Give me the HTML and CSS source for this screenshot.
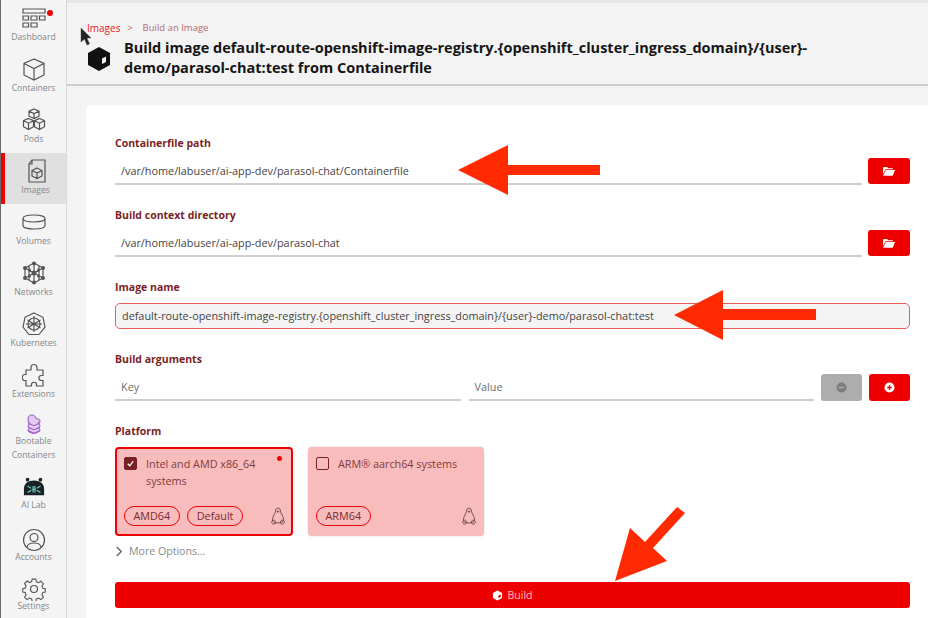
FILE: index.html
```html
<!DOCTYPE html>
<html lang="en">
<head>
<meta charset="utf-8">
<title>Build an Image</title>
<link rel="stylesheet" href="styles.css">
</head>
<body>
<div class="app">
  <nav class="sidebar">
    <a class="nav-item">
      <svg class="nav-icon" viewBox="0 -3.500 24 24"><path d="M1 -.5h22v4H1zM1 6.500h5.500v4H1zM9 6.500h6v4H9zM17.500 6.500H23v4h-5.500zM1 13.500h5.500v4H1zM9 13.500h6v4H9z"/></svg>
      <span class="nav-label">Dashboard</span><span class="nav-dot"></span>
    </a>
    <a class="nav-item">
      <svg class="nav-icon" viewBox="0 0 24 24"><path d="M12 2 2 6.500V18l10 5 10-5V6.500zM2 6.500l10 5 10-5M12 11.500V23"/></svg>
      <span class="nav-label">Containers</span>
    </a>
    <a class="nav-item">
      <svg class="nav-icon" viewBox="0 0 24 24"><path d="m12 1 5 2.200v5L12 10.500 7 8.200v-5zM7 3.200l5 2.300 5-2.300M12 5.500v5M6.500 10.500l5 2.200v6l-5 2.800-5-2.800v-6zM1.500 12.700l5 2.500 5-2.500M6.500 15.200v6.300M17.500 10.500l5 2.200v6l-5 2.800-5-2.800v-6zM12.500 12.700l5 2.500 5-2.500M17.500 15.200v6.300"/></svg>
      <span class="nav-label">Pods</span>
    </a>
    <a class="nav-item nav-active">
      <svg class="nav-icon" viewBox="0 0 24 24"><path d="M8 1h13v22H5V5zM8 1v4H5"/><path d="m13 9 5 2.500v5.500l-5 2.500-5-2.500v-5.500zM8 11.500l5 2.500 5-2.500M13 14v5.500"/></svg>
      <span class="nav-label">Images</span>
    </a>
    <a class="nav-item">
      <svg class="nav-icon" viewBox="0 0 24 24"><path d="M1 8.500C1 6 6 5 12 5s11 1 11 3.500v7c0 2.500-5 3.500-11 3.500S1 18 1 15.500zM1 8.500C1 11 6 12 12 12s11-1 11-3.500"/></svg>
      <span class="nav-label">Volumes</span>
    </a>
    <a class="nav-item">
      <svg class="nav-icon" viewBox="0 0 24 24"><path d="M12 2 21 7v10l-9 5-9-5V7zM12 2v20M3 7l18 10M21 7 3 17M7 5v14M17 5v14"/><g class="solid"><circle cx="12" cy="2.500" r="2"/><circle cx="12" cy="21.500" r="2"/><circle cx="3" cy="7" r="2"/><circle cx="21" cy="7" r="2"/><circle cx="3" cy="17" r="2"/><circle cx="21" cy="17" r="2"/><circle cx="12" cy="12" r="2.500"/><circle cx="7.500" cy="9" r="1.500"/><circle cx="16.500" cy="9" r="1.500"/><circle cx="7.500" cy="15" r="1.500"/><circle cx="16.500" cy="15" r="1.500"/></g></svg>
      <span class="nav-label">Networks</span>
    </a>
    <a class="nav-item">
      <svg class="nav-icon" viewBox="0 0 24 24"><path d="m12 1 9 4.300 2 9.700-6 7.500H7L1 15l2-9.700z"/><circle cx="12" cy="12" r="6"/><path d="M12 4v16M5.500 8l13 8M18.500 8l-13 8M4 12h16"/></svg>
      <span class="nav-label">Kubernetes</span>
    </a>
    <a class="nav-item">
      <svg class="nav-icon" viewBox="0 0 24 24"><path d="M9 4.500c0-4 6-4 6 0V7h6v5.500h-1.500c-3.500 0-3.500 5 0 5H21V23h-6.500v-1.500c0-3-5-3-5 0V23H4v-5.500H2.500c-3 0-3-6 0-6H4V7h5z"/></svg>
      <span class="nav-label">Extensions</span>
    </a>
    <a class="nav-item nav-tall">
      <svg class="nav-icon nav-icon-purple" viewBox="0 0 24 24"><path d="M5 8V5c0-5 9-5 9 0l5 2v3l-3 1 3 1.500v3l-3 1 3 1.500v2.500L12 24l-7-3v-2.500l3-1.500-3-1v-3l3-1.500L5 10z"/><path d="m5 11 7 3 7-3M5 16l7 3 7-3M5 20l7 3 7-3"/></svg>
      <span class="nav-label">Bootable<br>Containers</span>
    </a>
    <a class="nav-item nav-ai">
      <svg class="nav-icon nav-icon-ai" viewBox="0 0 24 24"><circle cx="5" cy="4" r="2"/><circle cx="19" cy="4" r="2"/><path d="M1 21v-7C1 8 6 5 12 5s11 3 11 9v7z"/><path class="ai-face" d="M5 11l4 2.500M19 11l-4 2.500M5 18l4-2.500M19 18l-4-2.500M10 14.500h4M11 11v7M13 11v7"/></svg>
      <span class="nav-label">AI Lab</span>
    </a>
    <a class="nav-item nav-account">
      <svg class="nav-icon" viewBox="0 0 24 24"><circle cx="12" cy="12" r="10.500"/><circle cx="12" cy="9.500" r="4"/><path d="M5 19.500c0-6 14-6 14 0"/></svg>
      <span class="nav-label">Accounts</span>
    </a>
    <a class="nav-item nav-settings">
      <svg class="nav-icon" viewBox="0 0 24 24"><circle cx="12" cy="12" r="3.500"/><path d="M10 1.500h4l.6 3 2.500 1 2.600-1.700 2.800 2.800-1.700 2.600 1 2.500 2.700.5v3.600l-2.700.6-1 2.500 1.700 2.500-2.800 2.800-2.600-1.700-2.500 1-.6 2.900h-4l-.6-2.900-2.500-1-2.600 1.700-2.800-2.800 1.700-2.500-1-2.500-2.700-.6V12l2.700-.5 1-2.500-1.700-2.600 2.800-2.800 2.600 1.700 2.500-1z" transform="translate(1.200 .8) scale(.9)"/></svg>
      <span class="nav-label">Settings</span>
    </a>
  </nav>

  <main class="content">
    <header class="page-head">
      <div class="crumbs"><a class="crumb-link">Images</a><span class="crumb-sep">&gt;</span><span class="crumb-current">Build an Image</span></div>
      <div class="title-row">
        <svg class="title-icon" viewBox="0 0 24 24"><path d="M12 0 23 6v12l-11 6L1 18V6z" fill="#111"/><path d="m15 11.500 4-2v5.500l-4 2z" fill="#f3f3f3"/></svg>
        <h1 class="title">Build image default-route-openshift-image-registry.{openshift_cluster_ingress_domain}/{user}-demo/parasol-chat:test from Containerfile</h1>
      </div>
    </header>

    <section class="panel">
      <div class="field">
        <label class="field-label">Containerfile path</label>
        <div class="field-row">
          <div class="input">/var/home/labuser/ai-app-dev/parasol-chat/Containerfile</div>
          <button class="icon-btn"><svg class="btn-svg" viewBox="0 0 16 12"><path d="M1 0h4.500l1.500 1.500h6v1.500H3.500L0 9V1zM3.800 4H16l-3 7.500H0z"/></svg></button>
        </div>
      </div>
      <div class="field">
        <label class="field-label">Build context directory</label>
        <div class="field-row">
          <div class="input">/var/home/labuser/ai-app-dev/parasol-chat</div>
          <button class="icon-btn"><svg class="btn-svg" viewBox="0 0 16 12"><path d="M1 0h4.500l1.500 1.500h6v1.500H3.500L0 9V1zM3.800 4H16l-3 7.500H0z"/></svg></button>
        </div>
      </div>
      <div class="field field-image">
        <label class="field-label">Image name</label>
        <div class="input input-boxed">default-route-openshift-image-registry.{openshift_cluster_ingress_domain}/{user}-demo/parasol-chat:test</div>
      </div>
      <div class="field">
        <label class="field-label">Build arguments</label>
        <div class="field-row args-row">
          <div class="input input-placeholder">Key</div>
          <div class="input input-placeholder">Value</div>
          <button class="icon-btn btn-gray"><svg class="btn-svg-round" viewBox="0 0 12 12"><circle cx="6" cy="6" r="5.500" fill="#7d7d7d"/><path d="M3 5.200h6v1.600H3z" fill="#adadad"/></svg></button>
          <button class="icon-btn"><svg class="btn-svg-round" viewBox="0 0 12 12"><circle cx="6" cy="6" r="5.500" fill="#fff"/><path d="M3.500 5.200h5v1.600h-5zM5.200 3.500h1.600v5H5.200z" fill="#e00"/></svg></button>
        </div>
      </div>
      <div class="field field-platform">
        <label class="field-label">Platform</label>
        <div class="platforms">
          <div class="platform platform-on">
            <span class="platform-dot"></span>
            <div class="platform-top">
              <span class="check check-on"><svg viewBox="0 0 12 12"><path d="m3 6.200 2.200 2.300L9 3.500" fill="none" stroke="#fff" stroke-width="1.500"/></svg></span>
              <span class="platform-name">Intel and AMD x86_64 systems</span>
            </div>
            <div class="platform-bottom">
              <span class="chip">AMD64</span><span class="chip">Default</span>
              <svg class="tux" viewBox="0 0 16 20"><path d="M8 1c2 0 2.800 1.500 2.800 3.500 0 2.500 3.700 6 3.700 10 0 2-3 3.500-6.500 3.500S1.500 16.500 1.500 14.500c0-4 3.700-7.500 3.700-10C5.200 2.500 6 1 8 1z"/><path d="M6.800 4.500h2.400L8 6zM.7 17c0-1.800 2.300-3 3.500-2 1.300 1 1.500 3 .2 4-1.500.8-3.700-.3-3.700-2zM15.300 17c0-1.800-2.300-3-3.500-2-1.300 1-1.500 3-.2 4 1.500.8 3.700-.3 3.700-2z"/></svg>
            </div>
          </div>
          <div class="platform">
            <div class="platform-top">
              <span class="check"></span>
              <span class="platform-name">ARM® aarch64 systems</span>
            </div>
            <div class="platform-bottom">
              <span class="chip">ARM64</span>
              <svg class="tux" viewBox="0 0 16 20"><path d="M8 1c2 0 2.800 1.500 2.800 3.500 0 2.500 3.700 6 3.700 10 0 2-3 3.500-6.500 3.500S1.500 16.500 1.500 14.500c0-4 3.700-7.500 3.700-10C5.200 2.500 6 1 8 1z"/><path d="M6.800 4.500h2.400L8 6zM.7 17c0-1.800 2.300-3 3.500-2 1.300 1 1.500 3 .2 4-1.500.8-3.700-.3-3.700-2zM15.300 17c0-1.800-2.300-3-3.500-2-1.300 1-1.500 3-.2 4 1.500.8 3.700-.3 3.700-2z"/></svg>
            </div>
          </div>
        </div>
      </div>
      <div class="more"><svg class="more-chev" viewBox="0 0 8 12"><path d="m1.500 1 5 5-5 5" fill="none" stroke="#666" stroke-width="1.500"/></svg><span>More Options...</span></div>
      <button class="build-btn"><svg class="build-icon" viewBox="0 0 24 24"><path d="M12 1 22 6.500v11L12 23 2 17.500v-11z" fill="#fff"/><path d="m14 12 5-2.500v6L14 18z" fill="#e00"/></svg><span>Build</span></button>
    </section>
  </main>
</div>

<svg class="cursor" viewBox="0 0 12 20"><path d="M1 1v14l3.500-3 2.500 6 2.500-1-2.500-6H11z" fill="#222" stroke="#555" stroke-width=".5"/></svg>
<svg class="annotations" viewBox="0 0 928 618">
  <path d="M600 165H508V145L458 170l50 25V175H600z"/>
  <path d="M816 309H723V290L674 315l49 25V320H816z"/>
  <path d="M677 507 685 513 653 548 667 561 615 581 630 528 645 542z"/>
</svg>
</body>
</html>
```

FILE: styles.css
```css
* { box-sizing: border-box; }
html, body { margin: 0; height: 100%; overflow: hidden; }
body { font-family: "Open Sans", "Noto Sans", sans-serif; background: #f3f3f3; color: #333; }
.app { display: flex; width: 928px; height: 618px; position: relative; overflow: hidden; }

.sidebar { flex: 0 0 67px; height: 618px; background: #f4f4f4; border-right: 1px solid #d8d8d8; border-left: 1px solid #6a6a6a; display: flex; flex-direction: column; }
.nav-item { position: relative; height: 51px; flex: 0 0 51px; display: flex; flex-direction: column; align-items: center; padding: 6px 0 0 1px; margin-left: -1px; }
.nav-icon { width: 24px; height: 24px; flex: none; fill: none; stroke: #545454; stroke-width: 1.200; }
.nav-icon .solid { fill: #545454; stroke: none; }
.nav-label { font-size: 8.600px; line-height: 14px; color: #868686; text-align: center; }
.nav-dot { position: absolute; top: 10px; left: 47px; width: 6px; height: 6px; border-radius: 50%; background: #e00; }
.nav-active { background: #e0e0e0; border-left: 4px solid #e00; margin-left: 0; padding-left: 0; }
.nav-tall { height: 64px; flex-basis: 64px; }
.nav-tall .nav-icon { height: 20px; }
.nav-icon-purple { stroke: #9a55c4; fill: #e3c9f0; }
.nav-ai { height: 50px; flex-basis: 50px; padding-top: 4px; }
.nav-ai .nav-icon { height: 22px; }
.nav-icon-ai { fill: #1b2226; stroke: none; }
.ai-face { fill: none; stroke: #6fd5c8; stroke-width: 1.200; }
.nav-account .nav-label { margin-top: -2px; }
.nav-settings { height: 45px; flex-basis: 45px; padding-top: 4px; }
.nav-settings .nav-label { margin-top: -2px; }

.content { flex: 1; min-width: 0; display: flex; flex-direction: column; border-top: 3px solid #e6e6e6; }
.page-head { height: 83px; border-bottom: 2px solid #cdcdcd; padding: 17px 20px 0 20px; flex: none; }
.crumbs { display: flex; align-items: center; font-size: 10px; line-height: 16px; }
.crumb-link { color: #f02020; }
.crumb-sep { margin: 0 10px 0 7px; color: #b06060; font-size: 9px; }
.crumb-current { color: #b56a6f; font-size: 9.500px; }
.title-row { display: flex; align-items: center; margin-top: 2px; gap: 13px; }
.title-icon { width: 24px; height: 24px; flex: none; margin-top: 1px; }
.title { margin: 0; font-size: 14.500px; line-height: 20px; font-weight: 700; color: #151515; width: 720px; }

.panel { flex: 1; background: #fff; margin: 19px 0 0 19px; border-radius: 6px 0 0 0; padding: 30px 18px 0 29px; }
.field { margin-bottom: 22px; }
.field-label { display: block; font-size: 10.500px; line-height: 16px; font-weight: 700; color: #7a1f24; margin-bottom: 7px; }
.field-row { display: flex; gap: 6px; }
.input { flex: 1; height: 27px; border-bottom: 2px solid #cfcfcf; font-size: 10.850px; line-height: 26px; padding-left: 6px; color: #444; background: #fff; }
.field-image .field-label { margin-bottom: 8px; }
.input-boxed { height: 26px; border: 1px solid #ee5a5a; border-radius: 5px; background: #f4f4f4; line-height: 24px; }
.input-placeholder { color: #6e6e6e; }
.args-row .input:nth-child(2) { margin-left: 2px; }
.args-row .btn-gray { margin-left: 1px; }
.args-row .icon-btn + .icon-btn { margin-left: 1px; }
.icon-btn { flex: 0 0 42px; height: 26px; border: 0; border-radius: 3px; background: #e00; display: flex; align-items: center; justify-content: center; padding: 0; }
.args-row .icon-btn { flex-basis: 41px; height: 27px; }
.btn-gray { background: #adadad; }
.btn-svg { width: 12px; height: 9px; fill: #fff; }
.btn-svg-round { width: 11px; height: 11px; }

.field-platform { margin-bottom: 7px; }
.field-platform .field-label { margin-bottom: 8px; }
.platforms { display: flex; gap: 15px; }
.platform { position: relative; width: 176px; height: 89px; background: #f9bcbc; border-radius: 4px; padding: 8px 8px 10px 8px; display: flex; flex-direction: column; justify-content: space-between; box-shadow: 0 0 2px #ccc; }
.platform-on { width: 178px; border: 2px solid #e00; padding: 6px 6px 8px 7px; box-shadow: none; }
.platform-dot { position: absolute; top: 7px; right: 9px; width: 5px; height: 5px; background: #e00; border-radius: 50%; }
.platform-top { display: flex; gap: 9px; }
.platform-name { font-size: 10.800px; line-height: 17px; color: #7f3a40; width: 122px; }
.check { flex: none; width: 13px; height: 13px; border: 1px solid #7a1f24; border-radius: 2px; margin-top: 2px; }
.check-on { background: #7a1f24; }
.check svg { display: block; width: 11px; height: 11px; }
.platform-bottom { display: flex; align-items: center; gap: 7.500px; }
.chip { font-size: 10.800px; line-height: 18px; border: 1px solid #e00; border-radius: 10px; padding: 0 8.500px; color: #7a2a30; }
.tux { width: 14px; height: 18px; margin-left: auto; fill: none; stroke: #5a3a3a; stroke-width: .9; }

.more { display: flex; align-items: center; gap: 6px; font-size: 10.600px; line-height: 16px; color: #8a8a8a; }
.more-chev { width: 8px; height: 11px; }
.build-btn { margin-top: 23px; width: 100%; height: 26px; background: #e00; border: 0; border-radius: 3px; display: flex; align-items: center; justify-content: center; gap: 4px; font: 10.600px "Open Sans", sans-serif; color: #f8bcbc; padding: 0; }
.build-icon { width: 11px; height: 11px; }

.cursor { position: absolute; left: 80px; top: 27px; width: 12px; height: 20px; }
.annotations { position: absolute; left: 0; top: 0; width: 928px; height: 618px; fill: #ff2a00; pointer-events: none; }
```
